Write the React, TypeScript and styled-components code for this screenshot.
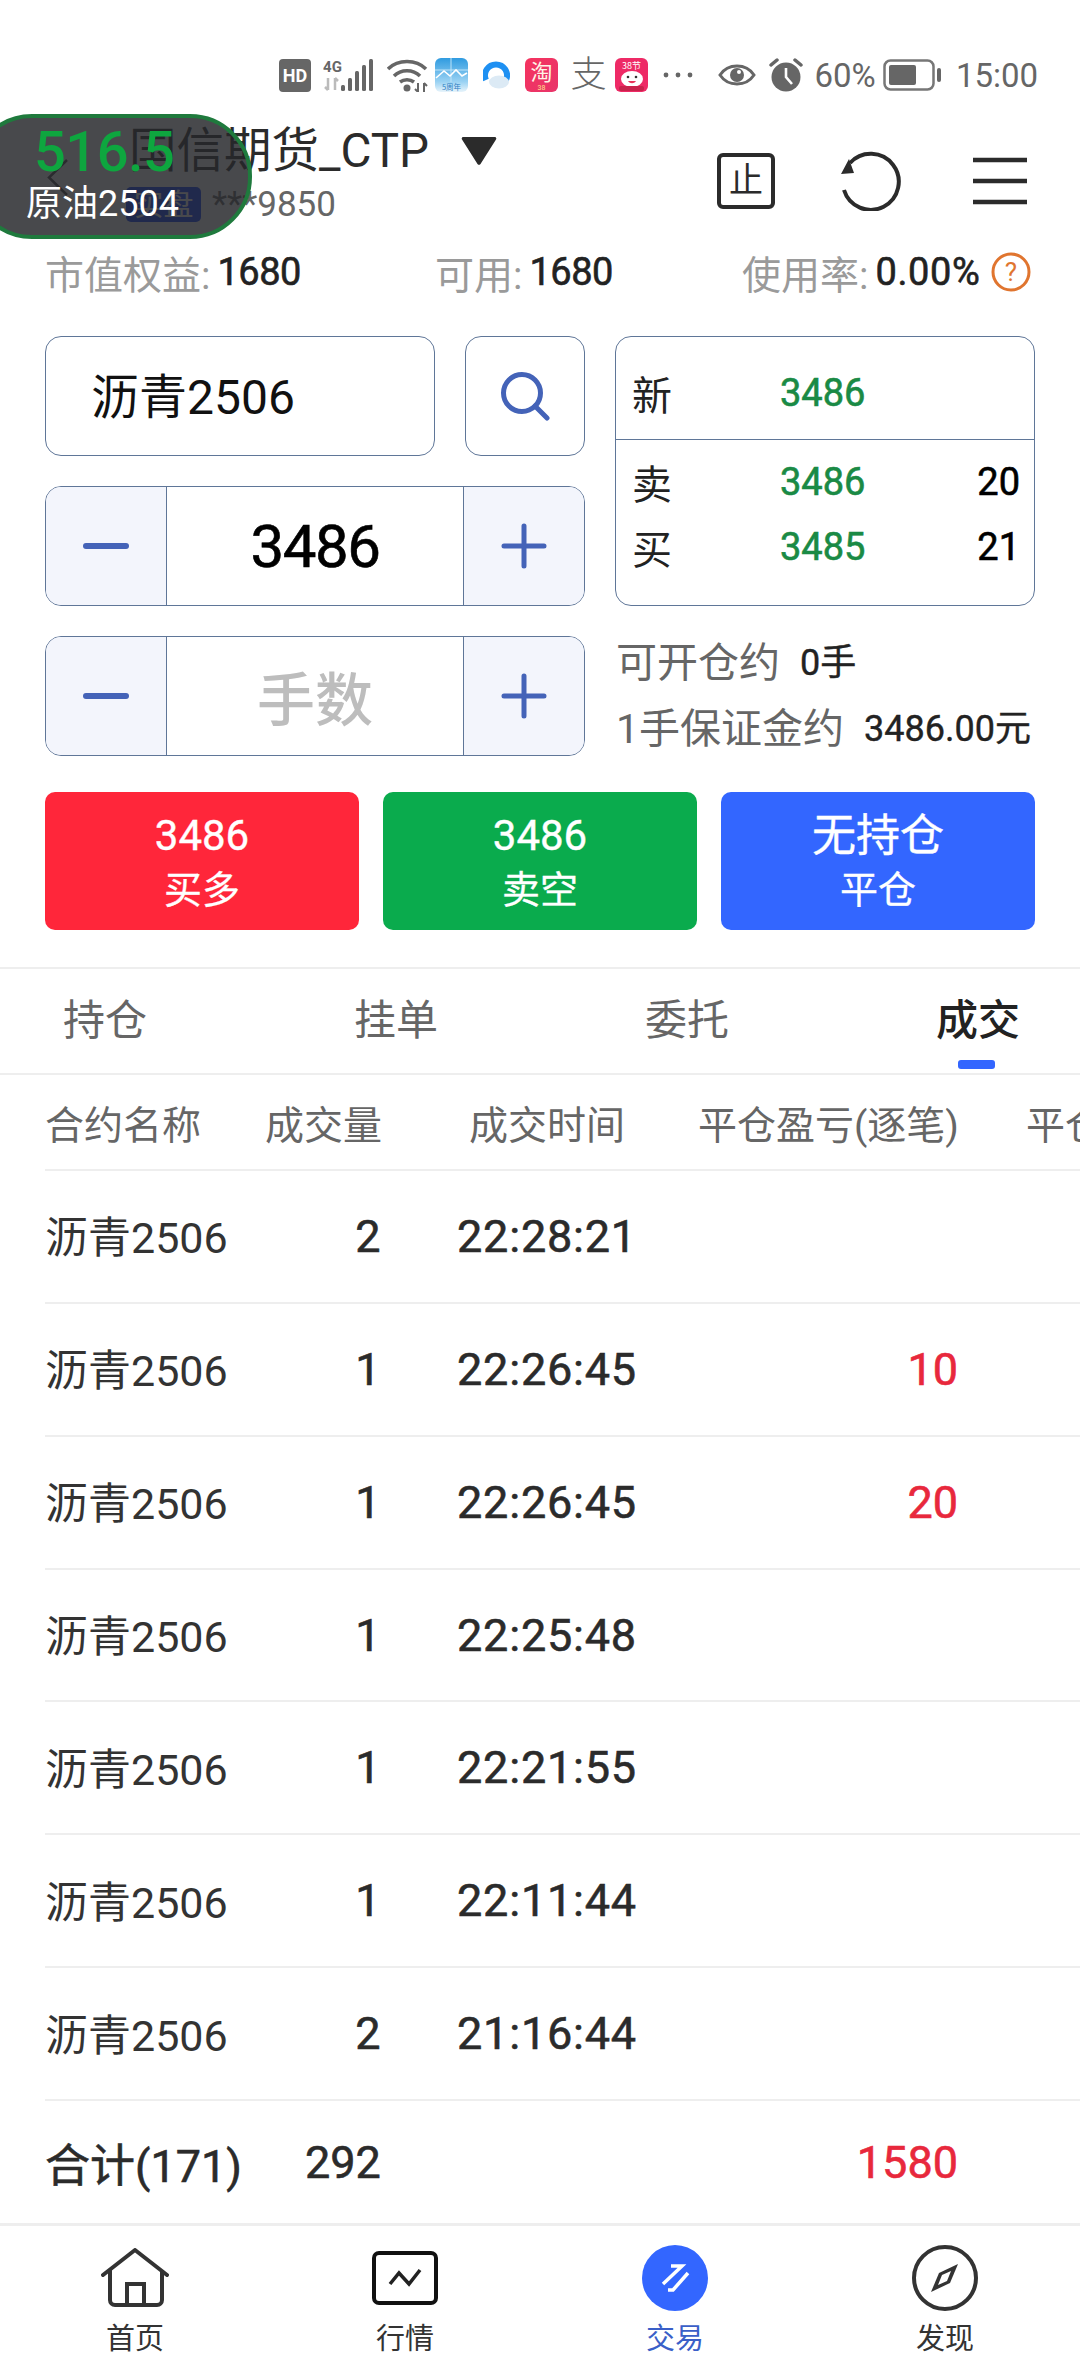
import React from "react";
import styled, { createGlobalStyle, css } from "styled-components";

const FONT = `Roboto, "Noto Sans CJK SC", sans-serif`;

const Global = createGlobalStyle`
  html, body { margin: 0; padding: 0; background: #fff; }
  body { font-family: ${FONT}; }
  * { box-sizing: border-box; }
`;

const firmDigits = css`
  font-weight: 400;
  -webkit-text-stroke: 0.6px currentColor;
`;

const Page = styled.div`
  position: relative;
  width: 1080px;
  height: 2376px;
  overflow: hidden;
  background: #fff;
  display: flex;
  flex-direction: column;
  color: #222;
`;

/* status bar */
const StatusBar = styled.div`
  height: 110px;
  padding: 40px 43px 0 0;
  display: flex;
  justify-content: flex-end;
  align-items: flex-start;
`;
const StatusSlot = styled.div<{ $ml: number; $w: number }>`
  margin-left: ${(p) => p.$ml}px;
  width: ${(p) => p.$w}px;
  height: 70px;
  display: flex;
  align-items: center;
  justify-content: center;
  flex: none;
`;
const StatusText = styled.span`
  font-size: 33px;
  color: #666;
  white-space: nowrap;
`;
const ZhiGlyph = styled.span`
  font-size: 36px;
  font-weight: 300;
  color: #666;
  line-height: 1;
`;

/* header */
const Header = styled.div`
  height: 127px;
  padding: 0 53px 0 46px;
  display: flex;
  align-items: flex-start;
`;
const BackIcon = styled.svg`
  margin-top: 48px;
  flex: none;
`;
const TitleBlock = styled.div`
  margin-left: 57px;
  padding-top: 16px;
  display: flex;
  flex-direction: column;
  gap: 8px;
`;
const TitleRow = styled.div`
  height: 50px;
  display: flex;
  align-items: center;
  gap: 32px;
`;
const Title = styled.span`
  font-size: 47.5px;
  line-height: 50px;
  color: #2b2b2b;
  margin-left: 3px;
  white-space: nowrap;
`;
const SubRow = styled.div`
  height: 40px;
  display: flex;
  align-items: center;
  gap: 11px;
`;
const Badge = styled.span`
  width: 75px;
  height: 35px;
  border-radius: 5px;
  background: #0a3cff;
  color: #fff;
  font-size: 30px;
  line-height: 35px;
  text-align: center;
`;
const Account = styled.span`
  font-size: 35px;
  color: #666;
`;
const HeaderIcons = styled.div`
  margin: 43px 0 0 auto;
  height: 56px;
  display: flex;
  align-items: center;
`;
const StopBox = styled.div`
  width: 58px;
  height: 56px;
  border: 4px solid #2b2b2b;
  border-radius: 6px;
  font-size: 34px;
  line-height: 46px;
  text-align: center;
  color: #2b2b2b;
`;
const RefreshIcon = styled.svg`
  margin-left: 66px;
`;
const MenuIcon = styled.svg`
  margin-left: 72px;
`;

/* stats */
const Stats = styled.div`
  height: 70px;
  margin-bottom: 29px;
  padding-left: 45px;
  display: grid;
  grid-template-columns: 390px 307px 1fr;
  align-items: center;
`;
const Stat = styled.div`
  display: flex;
  align-items: center;
  white-space: nowrap;
`;
const StatLabel = styled.span`
  font-size: 39px;
  color: #9a9a9a;
`;
const StatValue = styled.span<{ $ls?: number }>`
  margin-left: 7px;
  font-size: 38px;
  ${firmDigits};
  color: #222;
  letter-spacing: ${(p) => p.$ls ?? -0.5}px;
`;
const HelpIcon = styled.svg`
  margin-left: 11px;
`;

/* form */
const Form = styled.div`
  padding: 0 45px;
  display: grid;
  grid-template-columns: 390px 120px 420px;
  grid-template-rows: 120px 120px 120px;
  column-gap: 30px;
  row-gap: 30px;
`;
const SymbolInput = styled.div`
  border: 1px solid #5f7698;
  border-radius: 16px;
  display: flex;
  align-items: center;
  padding: 0 0 7px 45px;
  font-size: 48px;
  color: #111;
`;
const SearchButton = styled.div`
  border: 1px solid #5f7698;
  border-radius: 16px;
  display: flex;
  align-items: center;
  justify-content: center;
`;
const Stepper = styled.div`
  grid-column: 1 / span 2;
  border: 1px solid #5f7698;
  border-radius: 16px;
  overflow: hidden;
  display: grid;
  grid-template-columns: 120px 1fr 120px;
`;
const StepButton = styled.div`
  background: #f3f5fc;
  display: flex;
  align-items: center;
  justify-content: center;
`;
const StepValue = styled.div<{ $placeholder?: boolean }>`
  border-left: 1px solid #5f7698;
  border-right: 1px solid #5f7698;
  display: flex;
  align-items: center;
  justify-content: center;
  ${(p) =>
    p.$placeholder
      ? css`
          font-size: 58px;
          font-weight: 500;
          color: #bdbdbd;
        `
      : css`
          font-size: 60px;
          letter-spacing: -1.5px;
          color: #000;
          ${firmDigits};
        `}
`;
const QuoteBox = styled.div`
  grid-column: 3;
  grid-row: 1 / span 2;
  border: 1px solid #5f7698;
  border-radius: 16px;
  display: flex;
  flex-direction: column;
`;
const QuoteLast = styled.div`
  height: 103px;
  padding-top: 10px;
  border-bottom: 1px solid #5f7698;
  display: flex;
  align-items: center;
`;
const QuoteBook = styled.div`
  flex: 1;
  padding-bottom: 17px;
  display: flex;
  flex-direction: column;
  justify-content: center;
`;
const QuoteRow = styled.div`
  width: 100%;
  height: 65px;
  padding: 0 14px 0 16px;
  display: grid;
  grid-template-columns: 148px 1fr auto;
  align-items: center;
`;
const QuoteLabel = styled.span`
  font-size: 40px;
  color: #222;
`;
const QuotePrice = styled.span`
  font-size: 38px;
  ${firmDigits};
  color: #1a8a45;
`;
const QuoteQty = styled.span`
  font-size: 38px;
  ${firmDigits};
  color: #000;
`;
const Info = styled.div`
  grid-column: 3;
  padding: 3px 0 0 1px;
  display: flex;
  flex-direction: column;
  gap: 26px;
`;
const InfoLine = styled.div`
  height: 40px;
  display: flex;
  align-items: center;
  white-space: nowrap;
`;
const InfoLabel = styled.span`
  font-size: 41px;
  color: #666;
`;
const InfoValue = styled.span`
  margin-left: 20px;
  font-size: 36px;
  ${firmDigits};
  -webkit-text-stroke-width: 0.4px;
  color: #222;
`;

/* action buttons */
const Actions = styled.div`
  margin-top: 36px;
  padding: 0 45px;
  display: grid;
  grid-template-columns: repeat(3, 314px);
  column-gap: 24px;
`;
const Action = styled.div<{ $bg: string }>`
  height: 138px;
  border-radius: 10px;
  background: ${(p) => p.$bg};
  color: #fff;
  display: flex;
  flex-direction: column;
  align-items: center;
  padding-top: 20px;
`;
const ActionTop = styled.span<{ $cjk?: boolean }>`
  height: 48px;
  line-height: 48px;
  font-size: ${(p) => (p.$cjk ? 44 : 42)}px;
  -webkit-text-stroke: 0.4px currentColor;
`;
const ActionBottom = styled.span`
  margin-top: 6px;
  height: 48px;
  line-height: 48px;
  font-size: 38px;
  -webkit-text-stroke: 0.3px currentColor;
`;

/* tabs */
const Tabs = styled.div`
  margin-top: 37px;
  height: 108px;
  border-top: 2px solid #eee;
  border-bottom: 2px solid #eee;
  padding-left: 63px;
  display: flex;
  gap: 208px;
`;
const Tab = styled.div<{ $active?: boolean }>`
  position: relative;
  width: 83px;
  height: 104px;
  line-height: 104px;
  font-size: 42px;
  font-weight: ${(p) => (p.$active ? 500 : 400)};
  color: ${(p) => (p.$active ? "#222" : "#666")};
  white-space: nowrap;
`;
const TabMark = styled.span`
  position: absolute;
  left: 22px;
  top: 91px;
  width: 37px;
  height: 9px;
  border-radius: 3px;
  background: #3366ff;
`;

/* table */
const TableHead = styled.div`
  margin-left: 45px;
  height: 96px;
  border-bottom: 2px solid #eee;
  display: flex;
  align-items: center;
  overflow: hidden;
`;
const HeadCell = styled.div<{ $w: number }>`
  flex: none;
  width: ${(p) => p.$w}px;
  font-size: 39px;
  color: #666;
  white-space: nowrap;
`;
const Row = styled.div`
  margin-left: 45px;
  height: 132.86px;
  border-bottom: 2px solid #eee;
  display: grid;
  grid-template-columns: 275px 96px 219px 323px;
  align-items: center;
`;
const NameCell = styled.span`
  font-size: 43px;
  color: #333;
  white-space: nowrap;
  margin-top: -4px;
`;
const CountCell = styled.span`
  font-size: 45px;
  ${firmDigits};
  color: #2b2b2b;
  text-align: center;
`;
const TimeCell = styled.span`
  padding-left: 41px;
  font-size: 45px;
  ${firmDigits};
  letter-spacing: 0.8px;
  color: #2b2b2b;
  white-space: nowrap;
`;
const ProfitCell = styled.span`
  font-size: 45px;
  ${firmDigits};
  color: #e8283c;
  text-align: right;
`;
const TotalRow = styled.div`
  margin-left: 45px;
  height: 122px;
  display: grid;
  grid-template-columns: 260px 653px;
  align-items: center;
`;
const TotalName = styled.span`
  font-size: 45px;
  ${firmDigits};
  color: #2b2b2b;
  white-space: nowrap;
`;
const TotalFigures = styled.div`
  display: flex;
  justify-content: space-between;
  align-items: center;
`;
const TotalCount = styled.span`
  font-size: 45px;
  ${firmDigits};
  color: #2b2b2b;
`;
const TotalProfit = styled.span`
  font-size: 45px;
  ${firmDigits};
  color: #e8283c;
`;

/* bottom nav */
const Nav = styled.div`
  flex: 1;
  border-top: 3px solid #eee;
  display: grid;
  grid-template-columns: repeat(4, 270px);
`;
const NavItem = styled.div<{ $active?: boolean }>`
  display: flex;
  flex-direction: column;
  align-items: center;
  padding-top: 18px;
  font-size: 29px;
  color: ${(p) => (p.$active ? "#3a5fc8" : "#333")};
`;
const NavIconBox = styled.div`
  height: 67px;
  display: flex;
  align-items: center;
  justify-content: center;
`;
const NavLabel = styled.span`
  margin-top: 10px;
  line-height: 36px;
`;

/* floating ticker */
const Ticker = styled.div`
  position: absolute;
  left: -30px;
  top: 114px;
  width: 282px;
  height: 125px;
  border: 4px solid #1f7a3d;
  border-radius: 62px;
  background: rgba(37, 38, 42, 0.84);
  z-index: 5;
`;
const TickerPrice = styled.div`
  position: absolute;
  left: 60px;
  top: 1px;
  font-size: 56px;
  line-height: 66px;
  font-weight: 500;
  color: #0ea63f;
  letter-spacing: -0.5px;
`;
const TickerName = styled.div`
  position: absolute;
  left: 52px;
  top: 64px;
  font-size: 36px;
  line-height: 44px;
  color: #fff;
  white-space: nowrap;
`;

const HdIcon = () => (
  <svg width="32" height="33" viewBox="0 0 32 33">
    <rect width="32" height="33" rx="4" fill="#666" />
    <text x="16" y="23" fontSize="18" fontWeight="700" fill="#fff" textAnchor="middle" fontFamily="Roboto">HD</text>
  </svg>
);
const SignalIcon = () => (
  <svg width="51" height="33" viewBox="0 0 51 33">
    <text x="0" y="13" fontSize="15" fontWeight="700" fill="#666" fontFamily="Roboto" textLength="19">4G</text>
    <path d="M5 19v12M2 28l3 3M12 19v12M12 19l3 3" stroke="#bbb" strokeWidth="2.5" fill="none" />
    <rect x="18" y="26" width="4" height="6" rx="1.5" fill="#666" />
    <rect x="25" y="19" width="4" height="13" rx="1.5" fill="#666" />
    <rect x="32" y="12" width="4" height="20" rx="1.5" fill="#666" />
    <rect x="39" y="6" width="4" height="26" rx="1.5" fill="#666" />
    <rect x="46" y="0" width="4" height="32" rx="1.5" fill="#666" />
  </svg>
);
const WifiIcon = () => (
  <svg width="41" height="33" viewBox="0 0 41 33">
    <path d="M1 10C11 0 29 0 39 10M7 17c7-7 19-7 26 0M13 23c4-3 10-3 14 0" stroke="#666" strokeWidth="3.5" fill="none" />
    <circle cx="20" cy="29" r="3.5" fill="#666" />
    <path d="M31 24v9M28 30l3 3M37 24v9M37 24l3 3" stroke="#666" strokeWidth="2" fill="none" />
  </svg>
);
const ChartApp = () => (
  <svg width="33" height="34" viewBox="0 0 33 34">
    <defs>
      <linearGradient id="chartBg" x1="0" y1="0" x2="0" y2="1">
        <stop offset="0" stopColor="#2f9be0" />
        <stop offset="0.7" stopColor="#9ad2f3" />
        <stop offset="1" stopColor="#e8f4fb" />
      </linearGradient>
    </defs>
    <rect width="33" height="34" rx="6" fill="url(#chartBg)" />
    <path d="M16 0v24M0 12h33" stroke="#bfe4f8" strokeWidth="1" />
    <path d="M1 20l8-7 6 5 6-6 6 6 5-3" stroke="#fff" strokeWidth="1.6" fill="none" />
    <text x="16.5" y="32" fontSize="7.5" fill="#2f7fc4" textAnchor="middle" fontFamily="Noto Sans CJK SC">5周年</text>
  </svg>
);
const QqApp = () => (
  <svg width="27" height="30" viewBox="0 0 27 30">
    <path d="M3 20A11 11 0 1 1 23 20" stroke="#1e90f2" strokeWidth="6" fill="none" />
    <ellipse cx="16" cy="22" rx="10" ry="6.5" fill="#dceaf5" />
  </svg>
);
const TaoApp = () => (
  <svg width="33" height="34" viewBox="0 0 33 34">
    <defs>
      <linearGradient id="taoBg" x1="0" y1="0" x2="1" y2="1">
        <stop offset="0" stopColor="#f5335f" />
        <stop offset="1" stopColor="#e8356a" />
      </linearGradient>
    </defs>
    <rect width="33" height="34" rx="6" fill="url(#taoBg)" />
    <text x="16.5" y="22" fontSize="22" fill="#fff3e6" textAnchor="middle" fontFamily="Noto Sans CJK SC">淘</text>
    <text x="16.5" y="32" fontSize="7" fill="#ffe08a" textAnchor="middle" fontFamily="Roboto">38</text>
  </svg>
);
const PigApp = () => (
  <svg width="33" height="34" viewBox="0 0 33 34">
    <rect width="33" height="34" rx="6" fill="#ee2a66" />
    <text x="16.5" y="11" fontSize="9" fill="#fff" textAnchor="middle" fontFamily="Noto Sans CJK SC">38节</text>
    <ellipse cx="17" cy="21" rx="11" ry="8" fill="#fff" />
    <circle cx="13" cy="19" r="1.3" fill="#333" />
    <circle cx="21" cy="19" r="1.3" fill="#333" />
    <path d="M13 23c2 3 6 3 8 0z" fill="#e8345a" />
    <rect x="4" y="28" width="25" height="5" rx="2" fill="#c8224c" />
  </svg>
);
const DotsIcon = () => (
  <svg width="30" height="6" viewBox="0 0 30 6">
    <circle cx="3" cy="3" r="2.4" fill="#666" />
    <circle cx="15" cy="3" r="2.4" fill="#666" />
    <circle cx="27" cy="3" r="2.4" fill="#666" />
  </svg>
);
const EyeIcon = () => (
  <svg width="38" height="28" viewBox="0 0 38 28">
    <path d="M2 14C10 2 28 2 36 14C28 26 10 26 2 14Z" stroke="#666" strokeWidth="3" fill="none" />
    <circle cx="19" cy="14" r="7" fill="#666" />
    <circle cx="21" cy="11" r="2" fill="#fff" />
  </svg>
);
const AlarmIcon = () => (
  <svg width="34" height="34" viewBox="0 0 34 34">
    <circle cx="17" cy="19" r="14.5" fill="#666" />
    <path d="M17 10v9l6 7" stroke="#fff" strokeWidth="2.6" fill="none" />
    <path d="M2 7l6-5M32 7l-6-5" stroke="#666" strokeWidth="3.5" strokeLinecap="round" />
  </svg>
);
const BatteryIcon = () => (
  <svg width="59" height="32" viewBox="0 0 59 32">
    <rect x="1.5" y="1.5" width="49" height="29" rx="6" stroke="#777" strokeWidth="2.5" fill="none" />
    <rect x="6" y="6" width="27" height="20" rx="2" fill="#666" />
    <rect x="54" y="9" width="4" height="14" rx="2" fill="#666" />
  </svg>
);

const SearchIcon = () => (
  <svg width="50" height="50" viewBox="0 0 50 50">
    <circle cx="22" cy="22" r="18.5" stroke="#4463b8" strokeWidth="5" fill="none" />
    <path d="M35 35l12 12" stroke="#4463b8" strokeWidth="5" strokeLinecap="round" />
  </svg>
);
const MinusIcon = () => (
  <svg width="46" height="46" viewBox="0 0 46 46">
    <path d="M3 23h40" stroke="#4463b8" strokeWidth="6" strokeLinecap="round" />
  </svg>
);
const PlusIcon = () => (
  <svg width="46" height="46" viewBox="0 0 46 46">
    <path d="M3 23h40M23 3v40" stroke="#4463b8" strokeWidth="5" strokeLinecap="round" />
  </svg>
);

const rows: [string, string, string, string][] = [
  ["沥青2506", "2", "22:28:21", ""],
  ["沥青2506", "1", "22:26:45", "10"],
  ["沥青2506", "1", "22:26:45", "20"],
  ["沥青2506", "1", "22:25:48", ""],
  ["沥青2506", "1", "22:21:55", ""],
  ["沥青2506", "1", "22:11:44", ""],
  ["沥青2506", "2", "21:16:44", ""],
];

export default function App() {
  return (
    <Page>
      <Global />
      <StatusBar>
        <StatusSlot $ml={0} $w={32}><HdIcon /></StatusSlot>
        <StatusSlot $ml={12} $w={51}><SignalIcon /></StatusSlot>
        <StatusSlot $ml={13} $w={41}><WifiIcon /></StatusSlot>
        <StatusSlot $ml={7} $w={33}><ChartApp /></StatusSlot>
        <StatusSlot $ml={15} $w={27}><QqApp /></StatusSlot>
        <StatusSlot $ml={15} $w={33}><TaoApp /></StatusSlot>
        <StatusSlot $ml={14} $w={33}><ZhiGlyph>支</ZhiGlyph></StatusSlot>
        <StatusSlot $ml={10} $w={33}><PigApp /></StatusSlot>
        <StatusSlot $ml={15} $w={30}><DotsIcon /></StatusSlot>
        <StatusSlot $ml={25} $w={38}><EyeIcon /></StatusSlot>
        <StatusSlot $ml={13} $w={34}><AlarmIcon /></StatusSlot>
        <StatusSlot $ml={12} $w={60}><StatusText>60%</StatusText></StatusSlot>
        <StatusSlot $ml={8} $w={59}><BatteryIcon /></StatusSlot>
        <StatusSlot $ml={15} $w={80}><StatusText>15:00</StatusText></StatusSlot>
      </StatusBar>

      <Header>
        <BackIcon width="23" height="39" viewBox="0 0 23 39">
          <path d="M21 2L3 19.5L21 37" stroke="#444" strokeWidth="2.5" fill="none" />
        </BackIcon>
        <TitleBlock>
          <TitleRow>
            <Title>国信期货_CTP</Title>
            <svg width="36" height="30" viewBox="0 0 36 30">
              <path d="M2 1h32a1.5 1.5 0 0 1 1 2.4L19.5 28a2 2 0 0 1-3 0L1 3.4A1.5 1.5 0 0 1 2 1z" fill="#2b2b2b" />
            </svg>
          </TitleRow>
          <SubRow>
            <Badge>实盘</Badge>
            <Account>***9850</Account>
          </SubRow>
        </TitleBlock>
        <HeaderIcons>
          <StopBox>止</StopBox>
          <RefreshIcon width="60" height="60" viewBox="0 0 60 60">
            <path d="M3 39A28 28 0 1 0 9 12" stroke="#2b2b2b" strokeWidth="4" fill="none" />
            <path d="M0 23L13 22L8 8Z" fill="#2b2b2b" />
          </RefreshIcon>
          <MenuIcon width="54" height="48" viewBox="0 0 54 48">
            <path d="M0 3h54M0 24h54M0 45h54" stroke="#2b2b2b" strokeWidth="4.5" />
          </MenuIcon>
        </HeaderIcons>
      </Header>

      <Stats>
        <Stat><StatLabel>市值权益:</StatLabel><StatValue>1680</StatValue></Stat>
        <Stat><StatLabel>可用:</StatLabel><StatValue>1680</StatValue></Stat>
        <Stat>
          <StatLabel>使用率:</StatLabel>
          <StatValue $ls={0.6}>0.00%</StatValue>
          <HelpIcon width="40" height="40" viewBox="0 0 40 40">
            <circle cx="20" cy="20" r="18" stroke="#e0752f" strokeWidth="3" fill="none" />
            <text x="20" y="29" fontSize="26" fill="#e0752f" textAnchor="middle" fontFamily="Roboto">?</text>
          </HelpIcon>
        </Stat>
      </Stats>

      <Form>
        <SymbolInput>沥青2506</SymbolInput>
        <SearchButton><SearchIcon /></SearchButton>
        <QuoteBox>
          <QuoteLast>
            <QuoteRow>
              <QuoteLabel>新</QuoteLabel>
              <QuotePrice>3486</QuotePrice>
            </QuoteRow>
          </QuoteLast>
          <QuoteBook>
            <QuoteRow>
              <QuoteLabel>卖</QuoteLabel>
              <QuotePrice>3486</QuotePrice>
              <QuoteQty>20</QuoteQty>
            </QuoteRow>
            <QuoteRow>
              <QuoteLabel>买</QuoteLabel>
              <QuotePrice>3485</QuotePrice>
              <QuoteQty>21</QuoteQty>
            </QuoteRow>
          </QuoteBook>
        </QuoteBox>
        <Stepper>
          <StepButton><MinusIcon /></StepButton>
          <StepValue>3486</StepValue>
          <StepButton><PlusIcon /></StepButton>
        </Stepper>
        <Stepper>
          <StepButton><MinusIcon /></StepButton>
          <StepValue $placeholder>手数</StepValue>
          <StepButton><PlusIcon /></StepButton>
        </Stepper>
        <Info>
          <InfoLine><InfoLabel>可开仓约</InfoLabel><InfoValue>0手</InfoValue></InfoLine>
          <InfoLine><InfoLabel>1手保证金约</InfoLabel><InfoValue>3486.00元</InfoValue></InfoLine>
        </Info>
      </Form>

      <Actions>
        <Action $bg="#ff263a"><ActionTop>3486</ActionTop><ActionBottom>买多</ActionBottom></Action>
        <Action $bg="#0aab4d"><ActionTop>3486</ActionTop><ActionBottom>卖空</ActionBottom></Action>
        <Action $bg="#3366ff"><ActionTop $cjk>无持仓</ActionTop><ActionBottom>平仓</ActionBottom></Action>
      </Actions>

      <Tabs>
        <Tab>持仓</Tab>
        <Tab>挂单</Tab>
        <Tab>委托</Tab>
        <Tab $active>成交<TabMark /></Tab>
      </Tabs>

      <TableHead>
        <HeadCell $w={220}>合约名称</HeadCell>
        <HeadCell $w={204}>成交量</HeadCell>
        <HeadCell $w={229}>成交时间</HeadCell>
        <HeadCell $w={328}>平仓盈亏(逐笔)</HeadCell>
        <HeadCell $w={200}>平仓盈亏</HeadCell>
      </TableHead>

      {rows.map((r, i) => (
        <Row key={i}>
          <NameCell>{r[0]}</NameCell>
          <CountCell>{r[1]}</CountCell>
          <TimeCell>{r[2]}</TimeCell>
          <ProfitCell>{r[3]}</ProfitCell>
        </Row>
      ))}

      <TotalRow>
        <TotalName>合计(171)</TotalName>
        <TotalFigures>
          <TotalCount>292</TotalCount>
          <TotalProfit>1580</TotalProfit>
        </TotalFigures>
      </TotalRow>

      <Nav>
        <NavItem>
          <NavIconBox>
            <svg width="68" height="60" viewBox="0 0 68 60">
              <path d="M2 27L34 2L66 27" stroke="#333" strokeWidth="4" fill="none" strokeLinecap="round" strokeLinejoin="round" />
              <path d="M9 22V52a5 5 0 0 0 5 5H56a5 5 0 0 0 5-5V22" stroke="#333" strokeWidth="4" fill="none" />
              <path d="M26 57V36H43V57" stroke="#333" strokeWidth="4" fill="none" />
            </svg>
          </NavIconBox>
          <NavLabel>首页</NavLabel>
        </NavItem>
        <NavItem>
          <NavIconBox>
            <svg width="66" height="54" viewBox="0 0 66 54">
              <rect x="2" y="2" width="62" height="50" rx="5" stroke="#111" strokeWidth="4" fill="none" />
              <path d="M18 33L27 22L37 33L48 19" stroke="#222" strokeWidth="3.5" fill="none" />
            </svg>
          </NavIconBox>
          <NavLabel>行情</NavLabel>
        </NavItem>
        <NavItem $active>
          <NavIconBox>
            <svg width="66" height="66" viewBox="0 0 66 66">
              <circle cx="33" cy="33" r="33" fill="#3366ff" />
              <path d="M29 21H40L21 39M46 28L31 45H26" stroke="#fff" strokeWidth="3.5" fill="none" />
            </svg>
          </NavIconBox>
          <NavLabel>交易</NavLabel>
        </NavItem>
        <NavItem>
          <NavIconBox>
            <svg width="66" height="66" viewBox="0 0 66 66">
              <circle cx="33" cy="33" r="31" stroke="#333" strokeWidth="4" fill="none" />
              <path d="M46 19L27 28L19 47L38 38Z" fill="#333" />
              <path d="M39 26L30 30L26 40L35 36Z" fill="#fff" />
            </svg>
          </NavIconBox>
          <NavLabel>发现</NavLabel>
        </NavItem>
      </Nav>

      <Ticker>
        <TickerPrice>516.5</TickerPrice>
        <TickerName>原油2504</TickerName>
      </Ticker>
    </Page>
  );
}
